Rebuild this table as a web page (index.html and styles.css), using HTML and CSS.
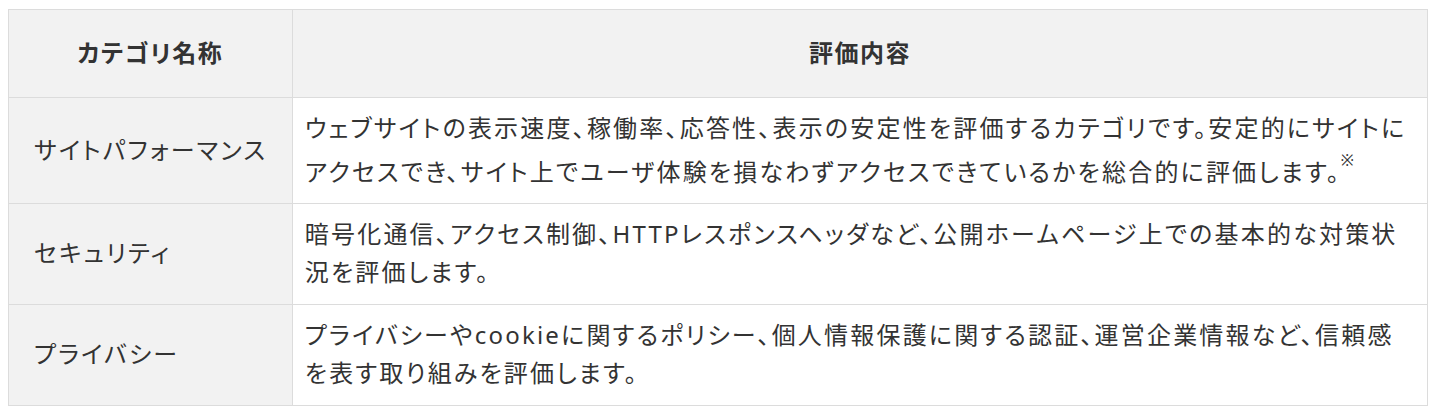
FILE: index.html
```html
<!DOCTYPE html>
<html lang="ja">
<head>
<meta charset="utf-8">
<link rel="stylesheet" href="styles.css">
</head>
<body>
<table class="eval-table">
  <thead>
    <tr>
      <th class="col-name">カテゴリ名称</th>
      <th class="col-desc">評価内容</th>
    </tr>
  </thead>
  <tbody>
    <tr>
      <td class="name">サイトパフォーマンス</td>
      <td class="desc">ウェブサイトの表示速度、稼働率、応答性、表示の安定性を評価するカテゴリです。安定的にサイトに<br>アクセスでき、サイト上でユーザ体験を損なわずアクセスできているかを総合的に評価します。<sup class="note">※</sup></td>
    </tr>
    <tr>
      <td class="name">セキュリティ</td>
      <td class="desc">暗号化通信、アクセス制御、HTTPレスポンスヘッダなど、公開ホームページ上での基本的な対策状<br>況を評価します。</td>
    </tr>
    <tr>
      <td class="name">プライバシー</td>
      <td class="desc">プライバシーやcookieに関するポリシー、個人情報保護に関する認証、運営企業情報など、信頼感<br>を表す取り組みを評価します。</td>
    </tr>
  </tbody>
</table>
</body>
</html>
```
FILE: styles.css
```css
html, body {
  background: #ffffff;
}
body {
  margin: 9px 8px;
  font-family: "Noto Sans", "Noto Sans CJK JP", sans-serif;
  color: #333333;
  font-size: 24px;
  line-height: 1.6;
  font-feature-settings: "palt";
  letter-spacing: 1.5px;
}
.eval-table {
  width: 100%;
  border-collapse: collapse;
  table-layout: fixed;
}
.eval-table th,
.eval-table td {
  border: 1px solid #dcdcdc;
  vertical-align: middle;
  box-sizing: border-box;
}
.eval-table th {
  background: #f2f2f2;
  font-weight: 700;
  text-align: center;
  padding: 24px 12px 25px;
}
.col-name {
  width: 20%;
}
.eval-table td {
  letter-spacing: 2.2px;
}
.eval-table td.name {
  background: #f2f2f2;
  padding: 11px 12px 12px 25px;
  text-align: left;
}
.eval-table td.desc {
  padding: 11px 12px 12px;
  text-align: left;
  white-space: nowrap;
}
.note {
  font-size: 65%;
  vertical-align: 0.95em;
}
```
